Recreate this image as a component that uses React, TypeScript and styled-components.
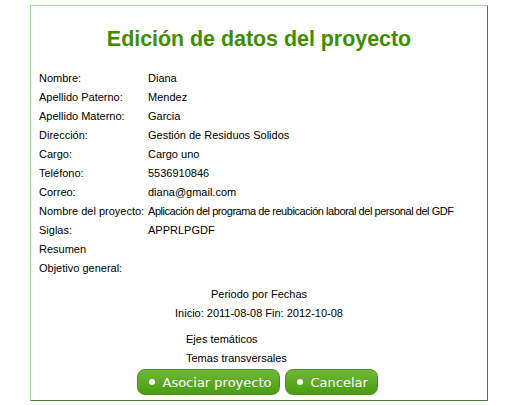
import styled, { createGlobalStyle } from 'styled-components'

const GlobalStyle = createGlobalStyle`
  body {
    margin: 0;
    background: #ffffff;
    font-family: "Liberation Sans", Arial, sans-serif;
    color: #000000;
  }
`

const Page = styled.div`
  width: 519px;
  height: 405px;
  padding-top: 5px;
  box-sizing: border-box;
`

const Panel = styled.div`
  width: 458px;
  height: 396px;
  margin: 0 auto 0 30px;
  box-sizing: border-box;
  border: 1px solid;
  border-color: #a3d99a #4e7a36 #4e7a36 #a3d99a;
  padding: 0 8px;
  display: flex;
  flex-direction: column;
`

const Title = styled.h1`
  margin: 19px 0 15px;
  text-align: center;
  color: #3f8c00;
  font-size: 21.4px;
  font-weight: bold;
  line-height: 28px;
`

const Fields = styled.div`
  display: grid;
  grid-template-columns: 109px 1fr;
  grid-auto-rows: 19px;
  font-size: 11px;
  align-items: center;
`

const Label = styled.div`
  white-space: nowrap;
`

const Value = styled.div<{ $tight?: boolean }>`
  white-space: nowrap;
  letter-spacing: ${p => (p.$tight ? '-0.45px' : 'normal')};
`

const Period = styled.div`
  margin-top: 8px;
  display: flex;
  flex-direction: column;
  align-items: center;
  font-size: 11px;
`

const Line = styled.div`
  height: 19px;
  line-height: 19px;
`

const Topics = styled.div`
  margin-top: 7px;
  padding-left: 147px;
  font-size: 11px;
`

const Actions = styled.div`
  display: flex;
  justify-content: center;
  gap: 5px;
  margin-top: 1px;
  padding-right: 4px;
`

const Button = styled.button<{ $width: number }>`
  width: ${p => p.$width}px;
  height: 26px;
  border: 1px solid #4c8d1a;
  border-radius: 8px;
  background: linear-gradient(#6fb83a, #4b9c12);
  color: #ffffff;
  font-family: "DejaVu Sans", sans-serif;
  font-size: 13px;
  display: flex;
  align-items: center;
  padding: 0 0 0 11px;
  gap: 8px;
  cursor: pointer;
`

const Dot = styled.span`
  width: 6px;
  height: 6px;
  border-radius: 50%;
  background: #ffffff;
`

const rows: [string, string][] = [
  ['Nombre:', 'Diana'],
  ['Apellido Paterno:', 'Mendez'],
  ['Apellido Materno:', 'Garcia'],
  ['Dirección:', 'Gestión de Residuos Solidos'],
  ['Cargo:', 'Cargo uno'],
  ['Teléfono:', '5536910846'],
  ['Correo:', 'diana@gmail.com'],
  ['Nombre del proyecto:', 'Aplicación del programa de reubicación laboral del personal del GDF'],
  ['Siglas:', 'APPRLPGDF'],
  ['Resumen', ''],
  ['Objetivo general:', ''],
]

export default function App() {
  return (
    <Page>
      <GlobalStyle />
      <Panel>
        <Title>Edición de datos del proyecto</Title>
        <Fields>
          {rows.flatMap(([label, value]) => [
            <Label key={label}>{label}</Label>,
            <Value key={label + '-v'} $tight={value.length > 40}>
              {value}
            </Value>,
          ])}
        </Fields>
        <Period>
          <Line>Periodo por Fechas</Line>
          <Line>Inicio: 2011-08-08 Fin: 2012-10-08</Line>
        </Period>
        <Topics>
          <Line>Ejes temáticos</Line>
          <Line>Temas transversales</Line>
        </Topics>
        <Actions>
          <Button $width={143}>
            <Dot />
            Asociar proyecto
          </Button>
          <Button $width={93}>
            <Dot />
            Cancelar
          </Button>
        </Actions>
      </Panel>
    </Page>
  )
}
